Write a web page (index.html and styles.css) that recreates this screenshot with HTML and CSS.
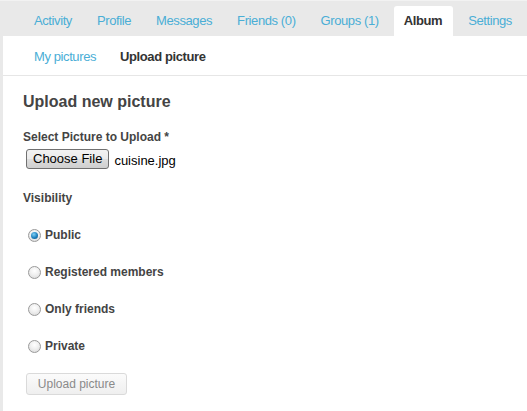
FILE: index.html
```html
<!DOCTYPE html>
<html>
<head>
<meta charset="utf-8">
<link rel="stylesheet" href="styles.css">
</head>
<body>
<div class="page">
  <nav class="tabs">
    <a class="tab">Activity</a>
    <a class="tab">Profile</a>
    <a class="tab">Messages</a>
    <a class="tab">Friends (0)</a>
    <a class="tab">Groups (1)</a>
    <a class="tab active">Album</a>
    <a class="tab">Settings</a>
  </nav>
  <div class="main">
    <nav class="subtabs">
      <a class="subtab">My pictures</a>
      <a class="subtab current">Upload picture</a>
    </nav>
    <form class="form">
      <h2 class="title">Upload new picture</h2>
      <div class="label">Select Picture to Upload *</div>
      <div class="file-row">
        <button type="button" class="file-btn">Choose File</button>
        <span class="file-name">cuisine.jpg</span>
      </div>
      <div class="label vis">Visibility</div>
      <div class="radios">
        <label class="radio"><span class="dot checked"></span>Public</label>
        <label class="radio"><span class="dot"></span>Registered members</label>
        <label class="radio"><span class="dot"></span>Only friends</label>
        <label class="radio"><span class="dot"></span>Private</label>
      </div>
      <button type="button" class="submit" disabled>Upload picture</button>
    </form>
  </div>
</div>
</body>
</html>
```
FILE: styles.css
```css
html, body {
  margin: 0;
  padding: 0;
  background: #fff;
}
body {
  font-family: "Liberation Sans", Arial, sans-serif;
  color: #444;
  width: 527px;
  height: 411px;
  overflow: hidden;
}
.page {
  display: flex;
  flex-direction: column;
  height: 411px;
}
.tabs {
  display: flex;
  align-items: flex-end;
  height: 36px;
  background: #e9e9e9;
  border-top: 1px solid #f2f2f2;
  box-sizing: border-box;
  padding-left: 24px;
  gap: 5px;
  white-space: nowrap;
}
.tab {
  display: block;
  flex-shrink: 0;
  height: 30px;
  line-height: 29px;
  padding: 0 10px;
  font-size: 13px;
  letter-spacing: -0.4px;
  color: #4aaed6;
  border-radius: 3px 3px 0 0;
}
.tab.active {
  background: #fff;
  color: #333;
  font-weight: bold;
  padding: 0 11px 0 10px;
}
.main {
  flex: 1;
  border-left: 3px solid #e9e9e9;
}
.subtabs {
  display: flex;
  height: 40px;
  align-items: center;
  padding-left: 31px;
  gap: 24px;
  border-bottom: 1px solid #e6e6e6;
  padding-top: 1px;
  box-sizing: border-box;
  white-space: nowrap;
}
.subtab {
  font-size: 13px;
  letter-spacing: -0.4px;
  color: #4aaed6;
}
.subtab.current {
  color: #333;
  font-weight: bold;
}
.form {
  padding: 16px 0 0 20px;
}
.title {
  margin: 0;
  font-size: 16px;
  line-height: 20px;
  font-weight: bold;
  color: #444;
}
.label {
  margin-top: 18px;
  font-size: 12px;
  line-height: 15px;
  font-weight: bold;
  color: #444;
}
.file-row {
  display: flex;
  align-items: center;
  margin-top: 4px;
  padding-left: 3px;
  gap: 5px;
}
.file-btn {
  font-family: "Liberation Sans", Arial, sans-serif;
  font-size: 13px;
  color: #000;
  height: 20px;
  padding: 0 6px;
  border: 1px solid #707070;
  border-radius: 3px;
  background: linear-gradient(#f2f2f2 0%, #ebebeb 50%, #dddddd 51%, #cfcfcf 100%);
  line-height: 18px;
}
.file-name {
  font-size: 13px;
  color: #000;
  padding-top: 3px;
}
.label.vis {
  margin-top: 22px;
}
.radios {
  display: flex;
  flex-direction: column;
  margin-top: 22px;
  padding-left: 5px;
  gap: 22px;
}
.radio {
  display: flex;
  align-items: center;
  gap: 4px;
  font-size: 12px;
  line-height: 15px;
  font-weight: bold;
  color: #444;
}
.dot {
  width: 11px;
  height: 11px;
  border-radius: 50%;
  border: 1px solid #9a9a9a;
  background: radial-gradient(circle at 50% 35%, #ffffff 0%, #f0f0f0 45%, #d6d6d6 100%);
  display: flex;
  align-items: center;
  justify-content: center;
}
.dot.checked::after {
  content: "";
  width: 7px;
  height: 7px;
  border-radius: 50%;
  background: radial-gradient(circle at 40% 35%, #7fd0f5 0%, #1c7fbd 55%, #0d4f7d 100%);
}
.submit {
  margin-top: 19px;
  margin-left: 3px;
  font-family: "Liberation Sans", Arial, sans-serif;
  font-size: 12px;
  color: #8a8a8a;
  height: 22px;
  width: 101px;
  padding: 0;
  border: 1px solid #dadada;
  border-radius: 3px;
  background: linear-gradient(#fbfbfb, #efefef);
}
```
